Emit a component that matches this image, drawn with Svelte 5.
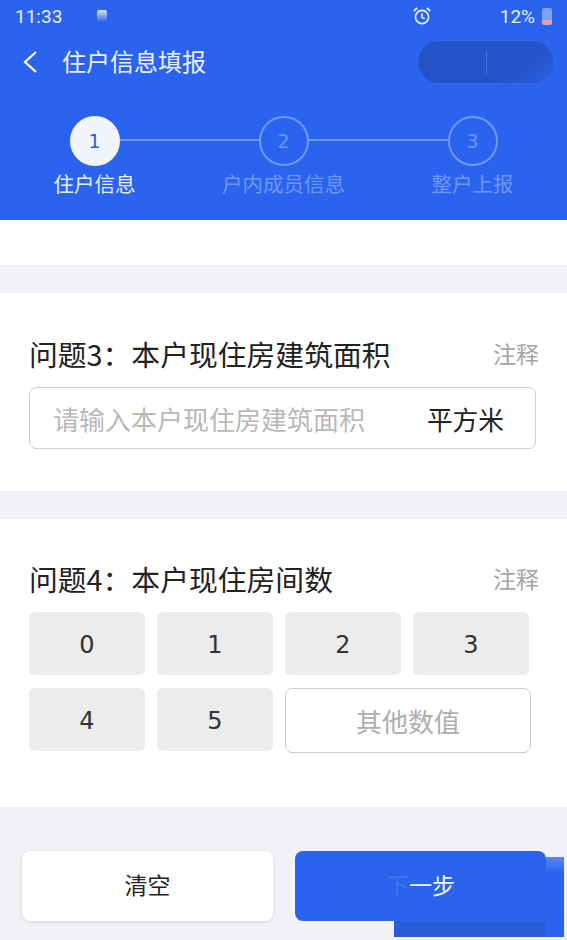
<script>
  const steps = [
    { n: 1, label: '住户信息', on: true },
    { n: 2, label: '户内成员信息', on: false },
    { n: 3, label: '整户上报', on: false }
  ];
  const row1 = ['0', '1', '2', '3'];
  const row2 = ['4', '5'];
</script>

<div class="page">
  <header class="head">
    <div class="status">
      <span class="time">11:33</span>
      <span class="notif"></span>
      <svg class="alarm" viewBox="0 0 20 20" width="20" height="20" fill="none" stroke="#e8eefc" stroke-width="1.7">
        <circle cx="10" cy="11" r="6.6" />
        <path d="M10 7.2V11.4L12.8 12.8M1.8 5 5.2 2M18.2 5 14.8 2" />
      </svg>
      <span class="pct">12%</span>
      <span class="batt"></span>
    </div>
    <div class="nav">
      <svg class="back" viewBox="0 0 16 24" width="16" height="24" fill="none" stroke="#fff" stroke-width="2.2">
        <path d="M14 2 3 12l11 10" />
      </svg>
      <span class="title">住户信息填报</span>
      <div class="capsule"><i></i></div>
    </div>
    <div class="stepper">
      {#each steps as s}
        <div class="step" class:on={s.on}>
          <div class="circle">{s.n}</div>
          <div class="label">{s.label}</div>
        </div>
      {/each}
    </div>
  </header>

  <div class="blank"></div>
  <div class="gap"></div>

  <section class="q3">
    <div class="qhead"><h2>问题3：本户现住房建筑面积</h2><span>注释</span></div>
    <div class="field"><span class="ph">请输入本户现住房建筑面积</span><span class="unit">平方米</span></div>
  </section>

  <div class="gap"></div>

  <section class="q4">
    <div class="qhead up"><h2>问题4：本户现住房间数</h2><span>注释</span></div>
    <div class="opts">
      {#each row1 as o}<div class="opt">{o}</div>{/each}
    </div>
    <div class="opts">
      {#each row2 as o}<div class="opt">{o}</div>{/each}
      <div class="other">其他数值</div>
    </div>
  </section>

  <footer class="foot">
    <div class="btn clear">清空</div>
    <div class="btn next">
      <i class="p1"></i><i class="p2"></i>
      <span class="txt"><span class="hid">下</span>一步</span>
    </div>
  </footer>
</div>

<style>
  :global(body) { margin: 0; background: #f0f2f7; }
  .page {
    width: 567px; height: 940px; overflow: hidden; background: #f0f2f7;
    font-family: "Noto Sans CJK SC", "Noto Sans", sans-serif; color: #222;
  }
  .head { height: 220px; background: #2a63ee; color: #fff; box-sizing: border-box; }
  .status { height: 32px; display: flex; align-items: center; padding: 0 15px; font-size: 19px; color: #e8eefc; font-family: Roboto, sans-serif; }
  .notif { width: 10px; height: 12px; margin-left: 35px; border-radius: 2px 2px 0 0; background: linear-gradient(#dfe6f8, #2a63ee); }
  .alarm { margin-left: auto; }
  .pct { margin-left: 68px; }
  .batt { width: 10px; height: 17px; margin-left: 7px; border-radius: 2px; background: linear-gradient(#7ea0f0 70%, #e0a0b0 70%); }
  .nav { height: 60px; display: flex; align-items: center; padding: 0 13px 0 22px; }
  .back { flex: none; }
  .title { font-size: 24px; margin-left: 24px; padding-bottom: 3px; color: #eef2fd; }
  .capsule {
    margin-left: auto; width: 136px; height: 42px; border-radius: 21px;
    background: linear-gradient(135deg, #2353c8 70%, #2a60e0);
    box-shadow: 0 0 0 1px #2f68e8;
    display: flex; align-items: center; justify-content: center;
  }
  .capsule i { width: 1px; height: 24px; background: #3f6fe0; }
  .stepper {
    margin-top: 24px; display: grid; grid-template-columns: repeat(3, 189px);
    position: relative; justify-content: center;
  }
  .stepper::before {
    content: ''; position: absolute; left: 95px; width: 378px; top: 23px; height: 2px; background: #6d96f4;
  }
  .step { display: flex; flex-direction: column; align-items: center; position: relative; color: #6f97f3; }
  .circle {
    width: 50px; height: 50px; box-sizing: border-box; border-radius: 50%;
    border: 2.5px solid #7199f4; background: #2a63ee; display: flex; align-items: center; justify-content: center;
    font-size: 19px; font-family: "DejaVu Sans", sans-serif; color: #6d96f4;
  }
  .step.on { color: #e8eefc; }
  .step.on .circle { background: #f2f5fc; border-color: #f2f5fc; color: #2a5fd8; }
  .label { font-size: 20.5px; line-height: 28px; margin-top: 3px; white-space: nowrap; }
  .blank { height: 45px; background: #fff; }
  .gap { height: 28px; background: #f0f2f7; }
  .q3 { height: 198px; background: #fff; box-sizing: border-box; padding: 46px 29px 0; }
  .q4 { height: 288px; background: #fff; box-sizing: border-box; padding: 45px 29px 0; }
  .qhead { display: flex; justify-content: space-between; align-items: center; height: 32px; margin-right: -1px; margin-top: -2px; }
  h2 { margin: 0; font-size: 28.8px; font-weight: 400; color: #222; white-space: nowrap; }
  .qhead span { font-size: 23px; color: #a5a5a5; }
  .field {
    margin-top: 18px; height: 62px; width: 507px; box-sizing: border-box; border: 1px solid #cfcfcf; border-radius: 7px;
    display: flex; align-items: center; justify-content: space-between; padding: 0 31px 0 23px;
  }
  .ph { font-size: 26px; color: #b8b8b8; }
  .unit { font-size: 25.7px; color: #222; }
  .opts { display: flex; gap: 12px; margin-bottom: 13px; }
  .qhead + .opts { margin-top: 18px; }
  .opt {
    width: 116px; height: 63px; padding-top: 2px; box-sizing: border-box; border-radius: 6px; background: #ececec; font-size: 24px; color: #333;
    display: flex; align-items: center; justify-content: center; font-family: "DejaVu Sans", sans-serif;
  }
  .other {
    width: 246px; height: 65px; box-sizing: border-box; border: 1px solid #cdcdcd; border-radius: 7px; background: #fff;
    color: #adadad; font-size: 26px; display: flex; align-items: center; justify-content: center;
  }
  .foot { height: 133px; box-sizing: border-box; padding: 44px 0 0 22px; display: flex; gap: 22px; }
  .btn {
    height: 70px; box-sizing: border-box; padding-bottom: 4px; border-radius: 8px; display: flex; align-items: center; justify-content: center; font-size: 23px; position: relative;
  }
  .clear { width: 251px; background: #fff; box-shadow: 0 1px 4px rgba(0,0,0,.12); color: #222; }
  .next { width: 251px; background: #2a63ee; color: #f2f5fc; }
  .txt { position: relative; }
  .hid { color: rgba(255,255,255,.12); }
  .p1 { position: absolute; left: 99px; top: 60px; width: 170px; height: 26px; background: linear-gradient(#2a63ee 38%, #2a5cd6 38%); }
  .p2 { position: absolute; left: 240px; top: 6px; width: 29px; height: 80px; background: linear-gradient(180deg, #5a86f0, #2a63ee 20%); clip-path: inset(0 0 0 11px); }
</style>
